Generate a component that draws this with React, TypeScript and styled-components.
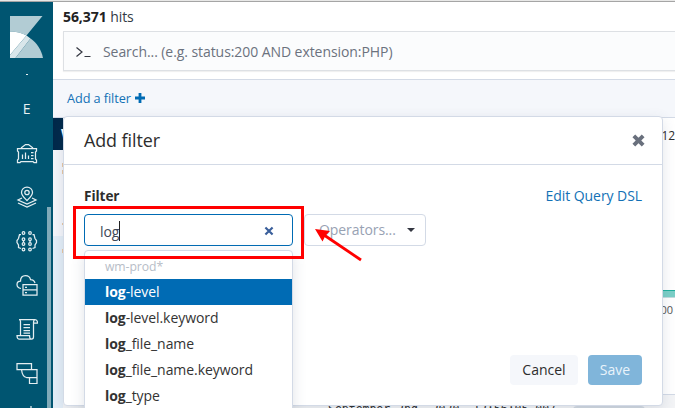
import React from "react";
import styled, { createGlobalStyle, css } from "styled-components";

const GlobalStyle = createGlobalStyle`
  * { box-sizing: border-box; }
  body {
    margin: 0;
    overflow: hidden;
    font-family: "Open Sans", "Noto Sans", sans-serif;
    font-size: 14px;
    line-height: 20px;
    letter-spacing: -0.07px;
    color: #2d2d2d;
    background: #fff;
  }
`;

const Window = styled.div`
  position: relative;
  width: 675px;
  height: 408px;
  overflow: hidden;
  display: flex;
  flex-direction: column;
`;

const TopEdge = styled.div`
  height: 2px;
  flex: none;
  background: #e8e8e7;
  border-bottom: 1px solid #a5a5a5;
`;

const Shell = styled.div`
  flex: 1;
  min-height: 0;
  display: grid;
  grid-template-columns: 53px 1fr;
`;

const Sidebar = styled.nav`
  position: relative;
  background: #005571;
  display: flex;
  flex-direction: column;
  align-items: center;
  overflow: hidden;
`;

const Logo = styled.svg`
  width: 33px;
  height: 42px;
  margin: 14px 1px 0 0;
  flex: none;
`;

const SpaceMark = styled.div<{ $height: number }>`
  height: ${(p) => p.$height}px;
  line-height: ${(p) => p.$height}px;
  flex: none;
  color: #e8f1f3;
`;

const SpaceDash = styled.div`
  width: 2px;
  height: 1px;
  margin: 16px 0 13px;
  flex: none;
  background: #e8f1f3;
`;

const NavList = styled.div`
  display: flex;
  flex-direction: column;
  margin-top: 1px;
`;

const NavItem = styled.div`
  height: 44px;
  flex: none;
  padding: 0 1px 0 2px;
  display: flex;
  align-items: center;
  justify-content: center;
  svg {
    width: 22px;
    height: 22px;
    fill: none;
    stroke: #e4eef1;
    stroke-width: 1.25;
  }
`;

const Scrollbar = styled.div`
  position: absolute;
  right: 2px;
  top: 205px;
  bottom: 0;
  width: 4px;
  background: #80aab8;
`;

const Main = styled.main`
  position: relative;
  min-width: 0;
  display: flex;
  flex-direction: column;
`;

const QueryArea = styled.header`
  height: 77px;
  flex: none;
  padding: 5px 0 0 10px;
`;

const Hits = styled.div`
  height: 20px;
  color: #333a45;
  b {
    color: #222;
  }
`;

const SearchBox = styled.div`
  height: 40px;
  margin-top: 4px;
  border: 1px solid #dde0e4;
  border-right: 0;
  background: #fbfcfd;
  box-shadow: 0 1px 1px rgba(0, 0, 0, 0.06);
  display: flex;
  align-items: center;
  padding: 1px 0 0 12px;
  gap: 12px;
  color: #6b727e;
  svg {
    width: 15px;
    height: 14px;
  }
`;

const FilterBar = styled.div`
  height: 39px;
  flex: none;
  border: solid #d3dae6;
  border-width: 1px 0;
  background: #f5f7fb;
  padding: 0 0 1px 14px;
  display: flex;
  align-items: center;
  gap: 4px;
  font-size: 12.7px;
  color: #1371b6;
  svg {
    width: 10px;
    height: 10px;
  }
`;

const Results = styled.div`
  flex: 1;
  min-height: 0;
  display: grid;
  grid-template-columns: 10px 1fr;
`;

const FieldsColumn = styled.div`
  display: flex;
  flex-direction: column;
  background: #f5f6fa;
  overflow: hidden;
`;

const IndexHeader = styled.div`
  height: 32px;
  flex: none;
  background: #00294a;
  color: #fff;
  font-weight: 700;
  line-height: 31px;
  padding-left: 8px;
`;

const FieldGroup = styled.div<{ $selected?: boolean }>`
  height: 86px;
  padding: 13px 0 0 9px;
  display: flex;
  flex-direction: column;
  gap: 3px;
  ${(p) =>
    p.$selected &&
    css`
      flex: 1;
      background: #e4eef7;
    `}
`;

const FieldMark = styled.i<{ $last?: boolean }>`
  width: 1px;
  height: ${(p) => (p.$last ? 2 : 4)}px;
  margin-top: ${(p) => (p.$last ? 46 : 0)}px;
  background: #e9c7a2;
`;

const ChartColumn = styled.div`
  display: flex;
  flex-direction: column;
  align-items: flex-end;
  overflow: hidden;
`;

const TimeRange = styled.div`
  height: 172px;
  padding-top: 8px;
  font-size: 12px;
  white-space: nowrap;
`;

const Bar = styled.div`
  width: 100%;
  height: 8px;
  flex: none;
  background: #7bcfc7;
  border-top: 1px solid #20b09d;
  border-bottom: 1px solid #c4dcdf;
`;

const AxisLabel = styled.div`
  height: 96px;
  padding: 2px 2px 0 0;
  font-size: 11px;
  color: #555;
`;

const DocumentRow = styled.div`
  flex: 1;
  width: 100%;
  border-top: 1px solid #d3dae6;
  background: #f3f4f6;
  padding: 5px 0 0 265px;
  font: 11.6px/18px "DejaVu Sans Mono", monospace;
  white-space: nowrap;
  display: flex;
  gap: 17px;
`;

const FieldTag = styled.div`
  width: 72px;
  height: 18px;
  margin-top: 6px;
  border-radius: 4px;
  background: #d3dae1;
`;

const Popover = styled.section`
  position: absolute;
  left: 10px;
  top: 114px;
  width: 600px;
  height: 290px;
  background: #fff;
  border: 1px solid #d3dae6;
  border-radius: 4px;
  box-shadow: 0 4px 14px rgba(60, 80, 110, 0.14);
  display: flex;
  flex-direction: column;
`;

const PopoverHeader = styled.div`
  height: 48px;
  flex: none;
  padding: 0 17px 2px 20px;
  border-bottom: 1px solid #d3dae6;
  display: flex;
  align-items: center;
  justify-content: space-between;
  font-size: 17.9px;
  line-height: 24px;
  svg {
    width: 13px;
    height: 13px;
    margin-top: 2px;
  }
`;

const PopoverBody = styled.div`
  flex: 1;
  padding: 21px 20px 20px;
  display: flex;
  flex-direction: column;
`;

const LabelRow = styled.div`
  display: flex;
  justify-content: space-between;
  height: 28px;
`;

const FieldLabel = styled.label`
  font-weight: 700;
  font-size: 13.6px;
`;

const Link = styled.a`
  color: #1371b6;
`;

const InputRow = styled.div`
  display: flex;
  gap: 11px;
`;

const Combo = styled.div<{ $width: number; $active?: boolean }>`
  position: relative;
  width: ${(p) => p.$width}px;
  height: 32px;
  border: 1px solid ${(p) => (p.$active ? "#006bb4" : "#d3dae6")};
  border-radius: 4px;
  display: flex;
  align-items: center;
  justify-content: space-between;
  padding: ${(p) => (p.$active ? "1px 18px 0 15px" : "0 10px 0 14px")};
  color: ${(p) => (p.$active ? "#404858" : "#98a2b3")};
`;

const Typed = styled.span`
  height: 20px;
  line-height: 21px;
  border-right: 1px solid #222;
`;

const Menu = styled.div`
  position: absolute;
  left: -1px;
  top: 35px;
  width: 209px;
  height: 190px;
  padding: 3px 0 0;
  border: 1px solid #d3dae6;
  border-radius: 4px;
  background: #fff;
  box-shadow: 0 4px 14px rgba(60, 80, 110, 0.16);
  color: #333;
  z-index: 1;
`;

const MenuGroup = styled.div`
  height: 25px;
  padding: 3px 20px 0;
  font-size: 12.2px;
  color: #b7bdc7;
`;

const MenuItem = styled.div<{ $selected?: boolean }>`
  height: 26px;
  line-height: 26px;
  padding: 0 20px;
  color: ${(p) => (p.$selected ? "#fff" : "#333")};
  background: ${(p) => (p.$selected ? "#006bb4" : "transparent")};
`;

const Actions = styled.div`
  margin-top: auto;
  display: flex;
  justify-content: flex-end;
  gap: 10px;
`;

const Button = styled.button<{ $primary?: boolean }>`
  width: ${(p) => (p.$primary ? 54 : 68)}px;
  height: 30px;
  padding: 0;
  border: 0;
  border-radius: 4px;
  font: inherit;
  color: ${(p) => (p.$primary ? "#e9f3fa" : "#2d2d2d")};
  background: ${(p) => (p.$primary ? "#80b5da" : "#f5f7fb")};
`;

const Annotation = styled.svg`
  position: absolute;
  left: 73px;
  top: 204px;
  width: 292px;
  height: 60px;
  z-index: 3;
`;

const suggestions = ["-level", "-level.keyword", "_file_name", "_file_name.keyword", "_type"];

const CanvasIcon = () => (
  <svg viewBox="0 0 22 22">
    <path d="M1.500 6.500h19v2.500l-1 1v7l1 1v2.500h-2.500l-1-1h-12l-1 1H1.500V18l1-1v-7l-1-1zM5 6l4.500-3.500h3L17 6" />
    <path d="M6.500 12.500v4.500M9.500 10.500v6.500M12.500 13.500v3.500M15 10.500h2.500M15 13.500h2.500M15 16.500h2.500" />
  </svg>
);

const MapsIcon = () => (
  <svg viewBox="0 0 22 22">
    <path d="M11 14.500C8 11.500 5.500 9.500 5.500 6.500a5.500 5.500 0 0 1 11 0c0 3-2.500 5-5.500 8z" />
    <circle cx="11" cy="6.500" r="2.200" />
    <path d="M6 12l-4 2 9 4 9-4-4-2M2 17l9 4 9-4" />
  </svg>
);

const LearningIcon = () => (
  <svg viewBox="0 0 22 22">
    {[7.5, 14].map((x) =>
      [3, 9.200, 14, 19.500].map((y) => <circle key={`${x}-${y}`} cx={x} cy={y} r="1.300" />),
    )}
    <path d="M5 4.500H3.500L2.500 8.500 1 10.500v2L2.500 15v2.500l2.500 1M16.500 4.500H18l1 4 1.500 2v2L19 15v2.500l-2.500 1M7.500 10.500v2M14 10.500v2" />
  </svg>
);

const InfraIcon = () => (
  <svg viewBox="0 0 22 22">
    <path d="M5 14.500C2.500 14 1 12.500 1 10.500 1 8.500 2.500 7 4.500 7 4.500 3.500 6.500 1.500 9.500 1.500c2.500 0 4.500 1.500 5 4 2.500 0 4 1.500 4.500 3.500" />
    <path d="M7 10.500h14v10.500H7zM7 15.800h14M9 13.300h2M9 18.500h2" />
  </svg>
);

const LogsIcon = () => (
  <svg viewBox="0 0 22 22">
    <path d="M4.500 17V3.500C4.500 2.500 4 1.500 3 1.500h16c1.500 0 2.500 1 2.500 3.500h-4V19c0 1.500-1 2-2 2H3c-1.500 0-2-1-2-3.500h12.500c0 2 .5 3.500 2 3.500M17.500 5c0-2 .5-3.500 1.500-3.500M7.500 6.500H14M7.500 9.500H14M7.500 12.500H14M7.500 15H14" />
  </svg>
);

const ApmIcon = () => (
  <svg viewBox="0 0 22 22">
    <path d="M1 1.500h14.500V7.500H1zM5.500 7.500c.5 4.500 2 7.500 5 8h10.500v-8H15.500M13.500 15.500h7.500v6h-7.500z" />
  </svg>
);

const navIcons = [CanvasIcon, MapsIcon, LearningIcon, InfraIcon, LogsIcon, ApmIcon];

const CrossIcon = ({ color, size, weight }: { color: string; size: number; weight: number }) => (
  <svg width={size} height={size} viewBox="0 0 12 12">
    <path d="M1.700 1.700l8.600 8.600M10.300 1.700l-8.600 8.600" stroke={color} strokeWidth={weight} />
  </svg>
);

export default function App() {
  return (
    <Window>
      <GlobalStyle />
      <TopEdge />
      <Shell>
        <Sidebar>
          <Logo viewBox="0 0 33 42">
            <path d="M0 0h32.500L16.500 19.500C12 17 6 15.500 0 15.500z" fill="#b2ccd4" />
            <path d="M0 15.500c6 0 12 1.500 16.500 4L0 39z" fill="#fff" />
            <path d="M16.500 19.500l4 3L5.500 42H0v-3z" fill="#d9e6ea" />
            <path d="M20.500 22.500C27 27 31.500 34 33 42H5.500z" fill="#b2ccd4" />
          </Logo>
          <SpaceDash />
          <SpaceMark $height={42}>E</SpaceMark>
          <NavList>
            {navIcons.map((Icon, i) => (
              <NavItem key={i}>
                <Icon />
              </NavItem>
            ))}
            <NavItem>
              <svg viewBox="0 0 22 22">
                <path d="M15 0v3M10 4h9" />
              </svg>
            </NavItem>
          </NavList>
          <Scrollbar />
        </Sidebar>
        <Main>
          <QueryArea>
            <Hits>
              <b>56,371</b> hits
            </Hits>
            <SearchBox>
              <svg viewBox="0 0 15 14" fill="none" stroke="#343741" strokeWidth="1.200">
                <path d="M.5 2.500l5.500 4.500-5.500 4.500M8.500 11.500h6" />
              </svg>
              Search... (e.g. status:200 AND extension:PHP)
            </SearchBox>
          </QueryArea>
          <FilterBar>
            Add a filter
            <svg viewBox="0 0 10 10">
              <path d="M5 0v10M0 5h10" stroke="#006bb4" strokeWidth="2.800" />
            </svg>
          </FilterBar>
          <Results>
            <FieldsColumn>
              <IndexHeader>W</IndexHeader>
              <FieldGroup>
                <FieldMark />
                <FieldMark />
                <FieldMark $last />
              </FieldGroup>
              <FieldGroup $selected>
                <FieldMark />
              </FieldGroup>
            </FieldsColumn>
            <ChartColumn>
              <TimeRange>September 2nd 2020, 12</TimeRange>
              <Bar />
              <AxisLabel>13:00</AxisLabel>
              <DocumentRow>
                September 2nd, 2020, 12:56:05.007
                <FieldTag />
              </DocumentRow>
            </ChartColumn>
          </Results>
          <Popover>
            <PopoverHeader>
              Add filter
              <CrossIcon color="#69707d" size={13} weight={3.6} />
            </PopoverHeader>
            <PopoverBody>
              <LabelRow>
                <FieldLabel>Filter</FieldLabel>
                <Link>Edit Query DSL</Link>
              </LabelRow>
              <InputRow>
                <Combo $width={209} $active>
                  <Typed>log</Typed>
                  <CrossIcon color="#3a5f9b" size={10} weight={2.6} />
                  <Menu>
                    <MenuGroup>wm-prod*</MenuGroup>
                    {suggestions.map((rest, i) => (
                      <MenuItem key={rest} $selected={i === 0}>
                        <b>log</b>
                        {rest}
                      </MenuItem>
                    ))}
                  </Menu>
                </Combo>
                <Combo $width={122}>
                  Operators...
                  <svg width="8" height="4" viewBox="0 0 8 4">
                    <path d="M0 0h8L4 4z" fill="#343741" />
                  </svg>
                </Combo>
              </InputRow>
              <Actions>
                <Button>Cancel</Button>
                <Button $primary>Save</Button>
              </Actions>
            </PopoverBody>
          </Popover>
        </Main>
      </Shell>
      <Annotation viewBox="73 204 292 60">
        <rect x="74.500" y="207.500" width="228" height="50" fill="none" stroke="#f00" strokeWidth="3" />
        <path d="M324 235L361 260" stroke="#f00" strokeWidth="2.800" />
        <path d="M315 229l15 2-4.500 4.500-3 6z" fill="#f00" />
      </Annotation>
    </Window>
  );
}
